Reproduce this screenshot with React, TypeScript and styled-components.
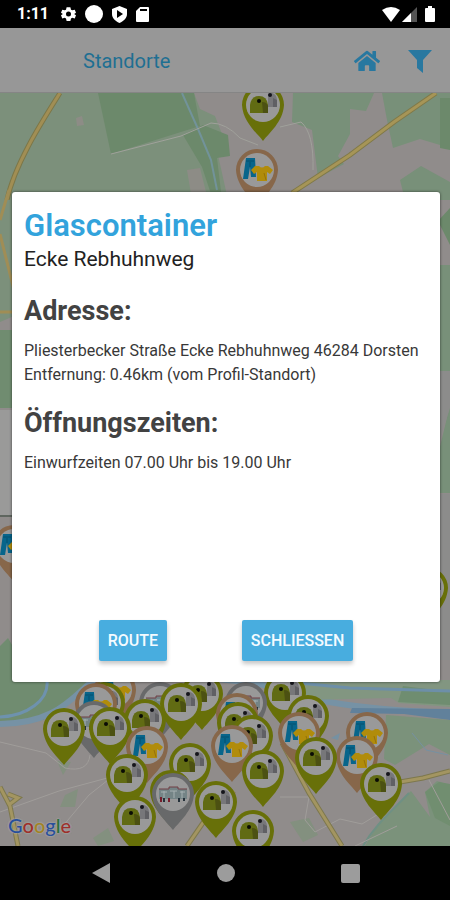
import React from "react";
import styled, { createGlobalStyle } from "styled-components";
import { FaHome } from "react-icons/fa";

const GlobalStyle = createGlobalStyle`
  *, *::before, *::after { box-sizing: border-box; }
  body { margin: 0; background: #000; font-family: Roboto, "Liberation Sans", sans-serif; }
  h1, h2, p { margin: 0; }
  button { font-family: inherit; cursor: pointer; }
`;

const Screen = styled.div`
  display: flex;
  flex-direction: column;
  min-height: 100vh;
`;

const StatusBar = styled.div`
  display: flex;
  align-items: center;
  justify-content: space-between;
  height: 28px;
  padding: 0 15px 0 17px;
  background: #000;
  color: #fff;
`;

const StatusGroup = styled.div<{ $gap: number }>`
  display: flex;
  align-items: center;
  gap: ${(p) => p.$gap}px;
`;

const Clock = styled.span`
  font-size: 16px;
  line-height: 20px;
  font-weight: 700;
  margin-right: 3px;
`;

const Content = styled.main`
  position: relative;
  flex: 1;
  display: flex;
  flex-direction: column;
`;

const Toolbar = styled.header`
  display: flex;
  align-items: center;
  justify-content: space-between;
  height: 65px;
  padding: 2px 10px 0 83px;
  background: #979797;
  border-bottom: 1px solid #858585;
`;

const ToolbarTitle = styled.span`
  font-size: 20px;
  line-height: 28px;
  color: #1f6f92;
`;

const ToolbarActions = styled.div`
  display: flex;
  gap: 12px;
`;

const IconButton = styled.button`
  display: flex;
  align-items: center;
  justify-content: center;
  width: 41px;
  height: 48px;
  padding: 0;
  border: 0;
  background: transparent;
  color: #2878a0;
`;

const MapArea = styled.div`
  position: relative;
  flex: 1;
  min-height: 0;
  overflow: hidden;
  background: #8e8b8a;
`;

const MapDrawing = styled.svg`
  position: absolute;
  inset: 0;
  width: 100%;
  height: 100%;
`;

const MapLogo = styled.div`
  position: absolute;
  left: 8px;
  bottom: 9px;
  font-family: Lato, sans-serif;
  font-size: 20px;
  line-height: 24px;
  font-weight: 500;
  text-shadow: 0 0 2px #aaa, 0 0 2px #aaa;
`;

const Letter = styled.span<{ $color: string }>`
  color: ${(p) => p.$color};
`;

const Overlay = styled.div`
  position: absolute;
  inset: 0;
  display: flex;
  align-items: center;
  padding: 0 10px 0 12px;
`;

const Dialog = styled.section`
  display: flex;
  flex-direction: column;
  width: 100%;
  min-height: 60%;
  padding: 16px 12px 21px;
  border-radius: 3px;
  background: #fff;
  box-shadow: 0 0 3px rgba(0, 0, 0, 0.6);
`;

const DialogTitle = styled.h1`
  font-size: 31px;
  line-height: 36px;
  font-weight: 600;
  color: #32a3dc;
`;

const Subtitle = styled.p`
  font-size: 21px;
  line-height: 31px;
  color: #222;
`;

const SectionTitle = styled.h2`
  margin: 16px 0;
  font-size: 27px;
  line-height: 40px;
  font-weight: 700;
  color: #424242;
`;

const Details = styled.p`
  margin-top: -8px;
  font-size: 16px;
  line-height: 24px;
  color: #383838;
`;

const Actions = styled.div`
  display: flex;
  justify-content: space-evenly;
  margin-top: auto;
`;

const ActionButton = styled.button`
  height: 41px;
  padding: 0 9px;
  border: 0;
  border-radius: 2px;
  background: #48addf;
  color: #f4fbff;
  font-size: 16px;
  font-weight: 500;
  line-height: 24px;
  box-shadow: 0 3px 4px rgba(0, 0, 0, 0.22);
`;

const NavBar = styled.nav`
  display: flex;
  align-items: center;
  justify-content: space-around;
  height: 54px;
  padding: 0 37px 0 39px;
  background: #000;
`;

const NavButton = styled.button`
  display: flex;
  align-items: center;
  justify-content: center;
  width: 48px;
  height: 48px;
  padding: 0;
  border: 0;
  background: transparent;
  color: #9c9c9c;
`;

type PinKind = "glass" | "clothes" | "depot";
type PinData = [PinKind, number, number];

const pins: PinData[] = [
  ["glass", 263, 105],
  ["clothes", 257, 170],
  ["clothes", 14, 546],
  ["glass", 427, 588],
  ["clothes", 115, 690],
  ["glass", 285, 693],
  ["glass", 202, 694],
  ["glass", 104, 703],
  ["depot", 160, 703],
  ["depot", 246, 703],
  ["clothes", 96, 704],
  ["glass", 181, 704],
  ["clothes", 237, 714],
  ["glass", 308, 716],
  ["glass", 145, 720],
  ["depot", 94, 722],
  ["glass", 238, 723],
  ["glass", 110, 728],
  ["glass", 64, 729],
  ["clothes", 299, 733],
  ["clothes", 367, 733],
  ["glass", 252, 736],
  ["clothes", 232, 746],
  ["clothes", 147, 747],
  ["clothes", 357, 757],
  ["glass", 316, 758],
  ["glass", 190, 764],
  ["glass", 263, 771],
  ["glass", 127, 775],
  ["glass", 381, 784],
  ["glass", 171, 791],
  ["depot", 173, 794],
  ["glass", 216, 802],
  ["glass", 135, 817],
  ["glass", 253, 831],
];

const pinColor: Record<PinKind, string> = {
  glass: "#687009",
  clothes: "#87674a",
  depot: "#68696a",
};

function PinSymbol({ kind }: { kind: PinKind }) {
  if (kind === "glass") {
    return (
      <>
        <path d="M5 2 V-6 Q5-12 9-12 Q14-11 14-4 V2Z" fill="#77777a" />
        <path d="M10 2 V-7 L14-5 V2Z" fill="#606064" />
        <path d="M-13 8 V0 Q-12-9-4-9 Q4-9 5 0 V8Z" fill="#616b13" />
        <path d="M0 8 L-1-3 Q4-3 5 1 V8Z" fill="#4c5112" />
        <circle cx="-4" cy="-4" r="2" fill="#090b05" />
        <circle cx="7" cy="-10" r="2" fill="#15151a" />
      </>
    );
  }
  if (kind === "clothes") {
    return (
      <>
        <path d="M-11-12 H-2 L-1 7 H-6 L-7-3 L-9 9 H-14Z" fill="#07658b" />
        <path d="M-11-9 H-3 M-7-8 V-3" stroke="#04516f" fill="none" />
        <path
          d="M-2-4 H2 Q5-1 8-4 H11 L16 0 L13 4 L10 2 V11 H0 V2 L-3 4 L-6 0Z"
          fill="#b18c0b"
        />
        <path d="M7 3 L9 10" stroke="#967209" fill="none" />
      </>
    );
  }
  return (
    <>
      <path d="M-14-5 H-4 V-7 H5 V-5 H14 V5 H-14Z" fill="#748486" />
      <path d="M-14-5 H-4 V-7 H5 V-5 H14" stroke="#713f45" fill="none" />
      <path d="M-12-2 H-6 M-3-3 H4 M7-2 H12 M-9-3 V4 M1-3 V4 M9-3 V4" stroke="#a5b0b1" fill="none" />
      <path d="M-12 3 V8 M-4 4 V8" stroke="#771d2b" strokeWidth="2" />
      <path d="M-9 4 V8 M6 4 V8 M11 4 V7" stroke="#25313a" strokeWidth="2" />
    </>
  );
}

function Pin({ kind, x, y }: { kind: PinKind; x: number; y: number }) {
  return (
    <g transform={`translate(${x} ${y})`}>
      <path
        d="M0 36 C-6 28 -20 17 -21 0 A21 21 0 0 1 21 0 C20 17 6 28 0 36Z"
        fill={pinColor[kind]}
      />
      <circle r="17" fill="#999" />
      <PinSymbol kind={kind} />
    </g>
  );
}

function StreetMap() {
  return (
    <MapDrawing viewBox="0 93 450 753" preserveAspectRatio="xMidYMid slice" aria-hidden="true">
      <rect y="93" width="450" height="753" fill="#908c8b" />
      <path d="M0 93 H194 L200 109 L215 116 L222 134 L218 155 L228 200 H0Z" fill="#7c907b" />
      <path d="M98 93 H194 L200 126 L111 154Z" fill="#6c896b" />
      <path d="M183 135 L203 125 L228 135 L230 156 L217 158 L222 200 H213 L202 167Z" fill="#6c896b" />
      <path d="M293 93 H374 L366 111 L350 109 L350 134 L338 156 L344 164 L318 178 L312 130 L292 122Z" fill="#789079" />
      <path d="M382 93 H450 V148 L420 139 L393 148 L387 120Z" fill="#789079" />
      <path d="M400 180 L421 166 L450 182 V200 H405Z" fill="#789079" />
      <path d="M440 98 H450 V150 L440 148Z" fill="#6c896b" />
      <path d="M187 170 L200 168 L208 200 H192Z M76 118 L82 116 L84 125 L77 126Z" fill="#8d8c86" />
      <path d="M182 93 L198 129 L211 160 L217 190" fill="none" stroke="#72939a" strokeWidth="2" />
      <path d="M60 93 C43 120 15 163 7 200" fill="none" stroke="#7c7748" strokeWidth="5" />
      <path d="M60 93 C43 120 15 163 7 200" fill="none" stroke="#a18e54" strokeWidth="3" />
      <path d="M436 93 L394 122 L350 155 L292 193" fill="none" stroke="#807948" strokeWidth="5" />
      <path d="M436 93 L394 122 L350 155 L292 193" fill="none" stroke="#a69557" strokeWidth="3" />
      <path d="M111 154 L181 136 L211 123 Q226 123 240 138 L258 145 M280 127 L301 122 Q314 133 313 170" fill="none" stroke="#a0a19b" strokeWidth="1" />

      <path d="M0 200 H14 V407 H0Z" fill="#7c907b" />
      <path d="M0 326 H14 V408 H0Z" fill="#708c70" />
      <path d="M0 322 L14 316 V330 H0Z" fill="#908c8b" />
      <path d="M0 410 H14 V515 H0Z" fill="#9a9a99" />
      <path d="M0 516 H14" stroke="#5f665f" strokeWidth="2" />
      <path d="M0 220 L9 190 M0 234 L14 290 M0 312 H14" stroke="#a08d55" strokeWidth="3" fill="none" />
      <path d="M438 265 H450 V371 H438Z M438 455 L450 405 V493 H438Z" fill="#789079" />
      <path d="M438 221 L450 208 V245Z" fill="#6c896b" />
      <path d="M438 371 H450 V408 L438 445Z M438 494 H450 V660 H438Z" fill="#8c8c8b" />

      <path d="M0 646 L8 638 L15 650 V680 H91 L74 700 L43 720 L0 725Z" fill="#708c70" />
      <path d="M0 724 C54 723 70 700 89 684 C160 667 200 677 260 684 C300 698 345 709 450 713" fill="none" stroke="#7692a5" strokeWidth="6" />
      <path d="M0 717 C27 716 49 700 47 681" fill="none" stroke="#6e92ae" strokeWidth="3" />
      <path d="M295 680 H450 V707 L399 703 L391 698 L307 700Z" fill="#829681" />
      <path d="M403 686 L450 692 V705 L398 702Z" fill="#6f8d70" />
      <path d="M299 683 L350 688 L450 691" stroke="#6d8fa8" strokeWidth="3" fill="none" />
      <path d="M352 708 L450 709 V720 L404 714 L350 713Z" fill="#61819b" />
      <path d="M386 715 L450 720 V755 L429 744 L395 765 L384 759Z M425 792 L437 781 L450 785 V827 L430 817Z M380 821 L411 791 L430 817 L450 827 V846 H365Z" fill="#7b927b" />
      <path d="M425 792 L439 782 L450 784 V826 L435 818Z" fill="#718e70" />
      <path d="M65 795 L78 789 L75 807 L60 807Z M93 838 L108 828 L114 841 L98 846Z M57 761 L71 762 L63 775Z M290 822 L309 818 L318 835 L303 842Z" fill="#83907f" />
      <path d="M412 733 L426 750 L448 755" fill="none" stroke="#7691a2" strokeWidth="1" />
      <path d="M331 738 L340 733 L338 740Z" fill="#7691a2" />
      <path d="M409 793 C391 812 375 825 363 846" fill="none" stroke="#6f9084" strokeWidth="2" />
      <path d="M0 742 L46 753 L65 768 Q88 773 90 755 M0 812 L59 791 L111 777 M62 827 L89 795 L113 776 M280 797 H309 L305 820 L315 832 L340 819 L362 824 L380 813 M429 780 L450 820 M355 846 L397 826" fill="none" stroke="#a09d9a" strokeWidth="1" />
      <path d="M0 787 L10 806 L18 846 M187 846 L207 817 L234 791 M282 743 L309 793 L342 846 M400 782 L423 778 L450 771 M8 794 L18 798 L10 804" fill="none" stroke="#7d784d" strokeWidth="5" />
      <path d="M0 787 L10 806 L18 846 M187 846 L207 817 L234 791 M282 743 L309 793 L342 846 M400 782 L423 778 L450 771 M8 794 L18 798 L10 804" fill="none" stroke="#a39561" strokeWidth="3" />
      {pins.map(([kind, x, y]) => (
        <Pin key={`${x}-${y}`} kind={kind} x={x} y={y} />
      ))}
    </MapDrawing>
  );
}

const logoLetters: [string, string][] = [
  ["G", "#284f9b"],
  ["o", "#9d302b"],
  ["o", "#a18325"],
  ["g", "#284f9b"],
  ["l", "#286f3b"],
  ["e", "#9d302b"],
];

export default function App() {
  return (
    <>
      <GlobalStyle />
      <Screen>
        <StatusBar>
          <StatusGroup $gap={9}>
            <Clock>1:11</Clock>
            <svg width="15" height="16" viewBox="0 0 24 24" fill="currentColor" aria-hidden="true">
              <path fillRule="evenodd" d="M9 1h6l1 4 2 1 4-1 2 5-3 2 3 2-2 5-4-1-2 1-1 4H9l-1-4-2-1-4 1-2-5 3-2-3-2 2-5 4 1 2-1ZM12 8a4 4 0 1 0 0 8 4 4 0 0 0 0-8Z" />
            </svg>
            <svg width="18" height="18" viewBox="0 0 18 18" fill="currentColor" aria-hidden="true"><circle cx="9" cy="9" r="9" /></svg>
            <svg width="15" height="17" viewBox="0 0 15 17" fill="currentColor" aria-hidden="true">
              <path fillRule="evenodd" d="M7.5 0 15 3v5c0 4-3 7-7.5 9C3 15 0 12 0 8V3ZM5 4v8l6-4Z" />
            </svg>
            <svg width="13" height="15" viewBox="0 0 13 15" fill="currentColor" aria-hidden="true">
              <path fillRule="evenodd" d="M4 0h8q1 0 1 1v13q0 1-1 1H1q-1 0-1-1V4ZM4 2v2h7V2Z" />
            </svg>
          </StatusGroup>
          <StatusGroup $gap={2}>
            <svg width="18" height="15" viewBox="0 0 18 15" fill="currentColor" aria-hidden="true"><path d="M0 3Q9-3 18 3L9 15Z" /></svg>
            <svg width="15" height="15" viewBox="0 0 15 15" aria-hidden="true"><path d="M15 0V15H0Z" fill="#555" /><path d="M9 6V15H0Z" fill="#fff" /></svg>
            <svg width="16" height="16" viewBox="0 0 16 16" fill="currentColor" aria-hidden="true"><path d="M9 0h4v2h2q1 0 1 1v12q0 1-1 1H7q-1 0-1-1V3q0-1 1-1h2Z" /></svg>
          </StatusGroup>
        </StatusBar>
        <Content>
          <Toolbar>
            <ToolbarTitle>Standorte</ToolbarTitle>
            <ToolbarActions>
              <IconButton type="button" aria-label="Startseite"><FaHome size={26} /></IconButton>
              <IconButton type="button" aria-label="Filter">
                <svg width="24" height="24" viewBox="0 0 24 24" fill="currentColor" aria-hidden="true"><path d="M0 1H24L15 11V24L9 19V11Z" /></svg>
              </IconButton>
            </ToolbarActions>
          </Toolbar>
          <MapArea>
            <StreetMap />
            <MapLogo>
              {logoLetters.map(([letter, color], i) => <Letter key={i} $color={color}>{letter}</Letter>)}
            </MapLogo>
          </MapArea>
          <Overlay>
            <Dialog role="dialog" aria-labelledby="place-title">
              <DialogTitle id="place-title">Glascontainer</DialogTitle>
              <Subtitle>Ecke Rebhuhnweg</Subtitle>
              <SectionTitle>Adresse:</SectionTitle>
              <Details>
                Pliesterbecker Straße Ecke Rebhuhnweg 46284 Dorsten
                <br />
                Entfernung: 0.46km (vom Profil-Standort)
              </Details>
              <SectionTitle>Öffnungszeiten:</SectionTitle>
              <Details>Einwurfzeiten 07.00 Uhr bis 19.00 Uhr</Details>
              <Actions>
                <ActionButton type="button">ROUTE</ActionButton>
                <ActionButton type="button">SCHLIESSEN</ActionButton>
              </Actions>
            </Dialog>
          </Overlay>
        </Content>
        <NavBar>
          <NavButton type="button" aria-label="Zurück">
            <svg width="18" height="20" viewBox="0 0 18 20" fill="currentColor" aria-hidden="true"><path d="M18 0V20L0 10Z" /></svg>
          </NavButton>
          <NavButton type="button" aria-label="Start">
            <svg width="18" height="18" viewBox="0 0 18 18" fill="currentColor" aria-hidden="true"><circle cx="9" cy="9" r="9" /></svg>
          </NavButton>
          <NavButton type="button" aria-label="Übersicht">
            <svg width="19" height="19" viewBox="0 0 19 19" fill="currentColor" aria-hidden="true"><rect width="19" height="19" rx="2" /></svg>
          </NavButton>
        </NavBar>
      </Screen>
    </>
  );
}
